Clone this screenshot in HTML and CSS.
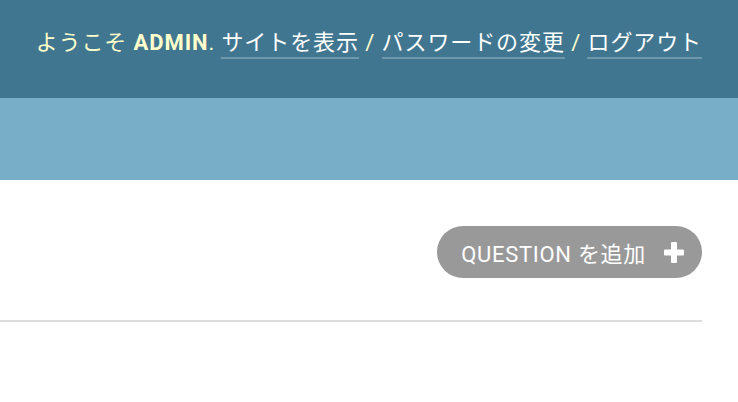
FILE: index.html
```html
<!DOCTYPE html>
<html lang="ja">
<head>
<meta charset="utf-8">
<title>Question 一覧</title>
<link rel="stylesheet" href="styles.css">
</head>
<body>
<div class="header">
  <div class="user-tools">
    ようこそ <strong>admin</strong>.
    <a href="#">サイトを表示</a> /
    <a href="#">パスワードの変更</a> /
    <a href="#">ログアウト</a>
  </div>
</div>
<div class="breadcrumbs"></div>
<div class="content">
  <div class="object-tools">
    <a href="#" class="addlink">Question を追加
      <svg class="plus" width="20" height="21" viewBox="0 0 20 21" aria-hidden="true">
        <rect x="7" y="0" width="6" height="21" rx="1" fill="#fff"/>
        <rect x="0" y="7.5" width="20" height="6" rx="1" fill="#fff"/>
      </svg>
    </a>
  </div>
  <div class="rule"></div>
</div>
</body>
</html>
```
FILE: styles.css
```css
html, body {
  margin: 0;
  padding: 0;
  background: #fff;
  font-family: "Roboto", "Noto Sans CJK JP", sans-serif;
}
.header {
  height: 98px;
  background: #417690;
  display: flex;
  justify-content: flex-end;
  align-items: flex-start;
  padding: 28px 36px 0;
  box-sizing: border-box;
}
.user-tools {
  color: #ffc;
  font-size: 22px;
  letter-spacing: 0.9px;
  white-space: nowrap;
  line-height: 30px;
}
.user-tools strong {
  text-transform: uppercase;
  font-weight: 700;
}
.user-tools a {
  color: #fff;
  text-decoration: none;
  border-bottom: 2px solid rgba(255, 255, 255, 0.25);
  padding-bottom: 2px;
}
.breadcrumbs {
  height: 82px;
  background: #79aec8;
}
.content {
  padding-top: 46px;
}
.object-tools {
  display: flex;
  justify-content: flex-end;
  padding-right: 36px;
}
.addlink {
  display: inline-flex;
  align-items: center;
  height: 52px;
  box-sizing: border-box;
  padding: 0 18px 0 24px;
  border-radius: 26px;
  background: #999;
  color: #fff;
  text-decoration: none;
  font-size: 22px;
  letter-spacing: 0.7px;
  text-transform: uppercase;
}
.plus {
  margin-left: 18px;
}
.rule {
  margin-top: 42px;
  margin-right: 36px;
  border-top: 2px solid #ddd;
}
```
